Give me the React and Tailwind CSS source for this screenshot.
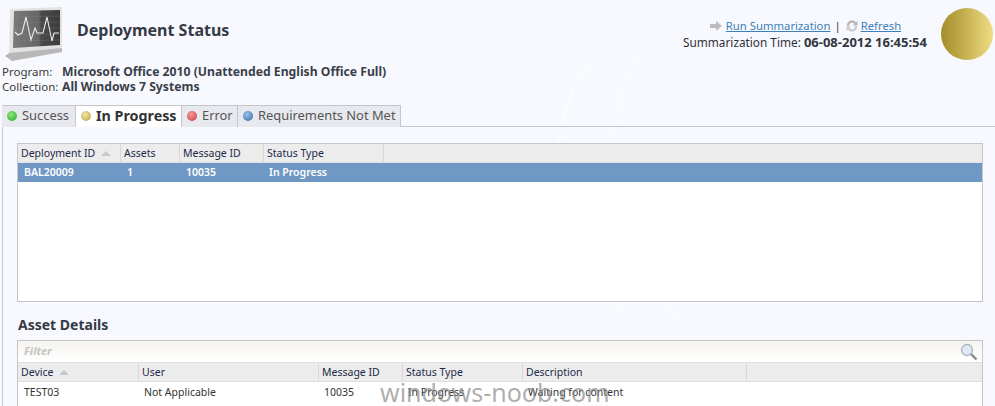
const font = "font-['Noto_Sans','DejaVu_Sans',sans-serif]"

const tabs = [
  { label: 'Success', dot: 'bg-[radial-gradient(circle_at_40%_35%,#8fe87f,#22a81f)]', width: 'w-[74px]' },
  { label: 'In Progress', dot: 'bg-[radial-gradient(circle_at_40%_35%,#efe6a5,#b9a23c)]', width: 'w-[106px]', active: true },
  { label: 'Error', dot: 'bg-[radial-gradient(circle_at_40%_35%,#f29b9b,#c8383c)]', width: 'w-[56px]' },
  { label: 'Requirements Not Met', dot: 'bg-[radial-gradient(circle_at_40%_35%,#9cc0ea,#2f66a8)]', width: 'w-[163px]' },
]

const deploymentCols = [
  { label: 'Deployment ID', width: 'w-[103px]', sort: true },
  { label: 'Assets', width: 'w-[59px]' },
  { label: 'Message ID', width: 'w-[84px]' },
  { label: 'Status Type', width: 'w-[120px]' },
]

const assetCols = [
  { label: 'Device', width: 'w-[121px]', sort: true },
  { label: 'User', width: 'w-[180px]' },
  { label: 'Message ID', width: 'w-[84px]' },
  { label: 'Status Type', width: 'w-[120px]' },
  { label: 'Description', width: 'w-[224px]' },
]

function MonitorIcon() {
  return (
    <svg width="60" height="56" viewBox="0 0 60 56">
      <defs>
        <linearGradient id="screen" x1="0" y1="0" x2="1" y2="0">
          <stop offset="0" stopColor="#7a7a7a" />
          <stop offset="0.55" stopColor="#666" />
          <stop offset="0.6" stopColor="#4a4a4a" />
          <stop offset="1" stopColor="#3c3c3c" />
        </linearGradient>
      </defs>
      <path d="M6 3 L58 1 L58 44 L5 50 Z" fill="#e2e2e2" />
      <path d="M1 50 L5 47 L58 42 L58 46 L8 55 Z" fill="#b8b8b8" />
      <path d="M10 5 L56 4 L56 39 L9 42 Z" fill="url(#screen)" />
      <path d="M10 11 L56 10 M10 17 L56 16 M10 23 L56 22 M10 29 L56 28 M10 35 L56 34" stroke="#8a8a8a" strokeWidth="0.5" opacity="0.5" />
      <path d="M11 26 L14 29 L18 27 L22 11 L27 34 L31 22 L33 27 H39 L43 11 L48 35 L50 27 H55" fill="none" stroke="#ececec" strokeWidth="1.1" />
    </svg>
  )
}

function HeaderRow({ cols }) {
  return (
    <div className="flex h-[19px] border-b border-[#e0e0e0] bg-[#ececec] text-[10.5px] text-[#1c2a4a]">
      {cols.map((col) => (
        <div key={col.label} className={`${col.width} flex shrink-0 items-center gap-[6px] border-r border-[#d8d8d8] pl-[3px] pt-[1px]`}>
          {col.label}
          {col.sort && <span className="h-0 w-0 border-x-[5px] border-b-[5px] border-x-transparent border-b-[#c4c8d0]" />}
        </div>
      ))}
    </div>
  )
}

export default function App() {
  return (
    <div className={`${font} relative h-[406px] w-[995px] overflow-hidden bg-[#f7f9fe] text-[#333]`}>
      {/* faint background arcs */}
      <svg width="995" height="406" viewBox="0 0 995 406" className="absolute left-0 top-0 opacity-40">
        <path d="M590 60 C540 130 545 240 620 310" fill="none" stroke="#ffffff" strokeWidth="3" />
        <path d="M640 50 C600 120 600 230 680 320" fill="none" stroke="#ffffff" strokeWidth="2" />
      </svg>

      <div className="relative">
        {/* top area */}
        <div className="flex h-[62px]">
          <div className="ml-[4px] mt-[6px] w-[73px] shrink-0">
            <MonitorIcon />
          </div>
          <h1 className="mt-[18px] text-[16px] leading-[24px] font-bold text-[#353a45]">Deployment Status</h1>
          <div className="ml-auto mr-[14px] mt-[17px] flex flex-col items-center leading-[17px]">
            <div className="flex items-center text-[11.3px] text-[#333]">
              <svg width="14" height="12" viewBox="0 0 14 12" className="mr-[3px]">
                <path d="M1 4 H7 V1 L13 6 L7 11 V8 H1 Z" fill="#bcbcbc" />
              </svg>
              <a className="text-[#3d7fb8] underline">Run Summarization</a>
              <span className="mx-[4px]">|</span>
              <svg width="14" height="14" viewBox="0 0 14 14" className="mr-[2px]">
                <path d="M2 7 A5 5 0 0 1 11 3.5 L12.5 2 V6.5 H8 L9.5 5 A3 3 0 0 0 4 7 Z" fill="#b4b4b4" />
                <path d="M12 7 A5 5 0 0 1 3 10.5 L1.5 12 V7.5 H6 L4.5 9 A3 3 0 0 0 10 7 Z" fill="#cacaca" />
              </svg>
              <a className="text-[#3d7fb8] underline">Refresh</a>
            </div>
            <div className="text-[11.8px] text-[#2f3238]">
              Summarization Time: <b className="text-[13px] text-[#33363d]">06-08-2012 16:45:54</b>
            </div>
          </div>
          <div className="mr-[2px] mt-[8px] h-[52px] w-[52px] shrink-0 rounded-full bg-gradient-to-r from-[#a38d25] to-[#efdd82]" />
        </div>

        {/* program info */}
        <div className="ml-[2px] mt-[2px] text-[12px] leading-[15px]">
          <div className="flex">
            <span className="w-[60px] text-[11.5px] text-[#3a3a3a]">Program:</span>
            <b className="text-[12.2px] text-[#3a3f4a]">Microsoft Office 2010 (Unattended English Office Full)</b>
          </div>
          <div className="flex">
            <span className="w-[60px] text-[11.5px] text-[#3a3a3a]">Collection:</span>
            <b className="text-[12.2px] text-[#3a3f4a]">All Windows 7 Systems</b>
          </div>
        </div>

        {/* tabs */}
        <div className="ml-[2px] mt-[11px] flex h-[22px] border-b border-[#c4c6cc]">
          {tabs.map((tab) => (
            <div
              key={tab.label}
              className={`${tab.width} flex h-[22px] shrink-0 items-center gap-[5px] border-t border-r border-[#c4c6cc] pb-[1px] pl-[5px] ${tab.active ? 'bg-white text-[14.3px] font-bold text-[#333]' : 'bg-[#e7e9ef] text-[12.9px] text-[#555]'}`}
            >
              <span className={`${tab.dot} h-[10px] w-[10px] shrink-0 rounded-full`} />
              <span className="whitespace-nowrap">{tab.label}</span>
            </div>
          ))}
        </div>

        {/* tab content */}
        <div className="ml-[2px] border-l border-[#c4c6cc] pb-[40px] pl-[14px] pt-[16px]">
          <div className="h-[159px] w-[966px] border border-[#c4c6cc] bg-white">
            <HeaderRow cols={deploymentCols} />
            <div className="flex h-[19px] items-center bg-[#7098c4] pt-[1px] text-[10.5px] font-semibold text-white">
              <div className="w-[103px] pl-[6px]">BAL20009</div>
              <div className="w-[59px] pl-[6px]">1</div>
              <div className="w-[84px] pl-[6px]">10035</div>
              <div className="pl-[5px]">In Progress</div>
            </div>
          </div>

          <h2 className="mb-[5px] ml-[1px] mt-[13px] text-[14px] leading-[20px] font-bold text-[#353a45]">Asset Details</h2>

          <div className="h-[80px] w-[966px] border border-[#c4c6cc] bg-white">
            <div className="flex h-[22px] items-center justify-between border-b border-[#e0e0e0] bg-gradient-to-b from-[#f6f4ee] to-white pl-[6px] pr-[4px]">
              <span className="text-[11px] font-bold italic text-[#c4c4c4]">Filter</span>
              <svg width="18" height="18" viewBox="0 0 18 18">
                <circle cx="7" cy="7" r="5.5" fill="#dfe8f5" stroke="#a9b2bf" strokeWidth="1.3" />
                <path d="M11 11 L16.5 16.5" stroke="#8a8a8a" strokeWidth="2.4" />
              </svg>
            </div>
            <HeaderRow cols={assetCols} />
            <div className="flex h-[21px] items-center text-[10.5px] text-[#333]">
              <div className="w-[121px] pl-[6px]">TEST03</div>
              <div className="w-[180px] pl-[5px]">Not Applicable</div>
              <div className="w-[84px] pl-[5px]">10035</div>
              <div className="w-[120px] pl-[5px]">In Progress</div>
              <div className="pl-[5px]">Waiting for content</div>
            </div>
          </div>
        </div>
      </div>

      {/* watermark */}
      <div className="absolute left-[380px] top-[374px] text-[25px] leading-[36px] whitespace-nowrap text-[#8a8a8a]/70">windows-noob.com</div>
    </div>
  )
}
